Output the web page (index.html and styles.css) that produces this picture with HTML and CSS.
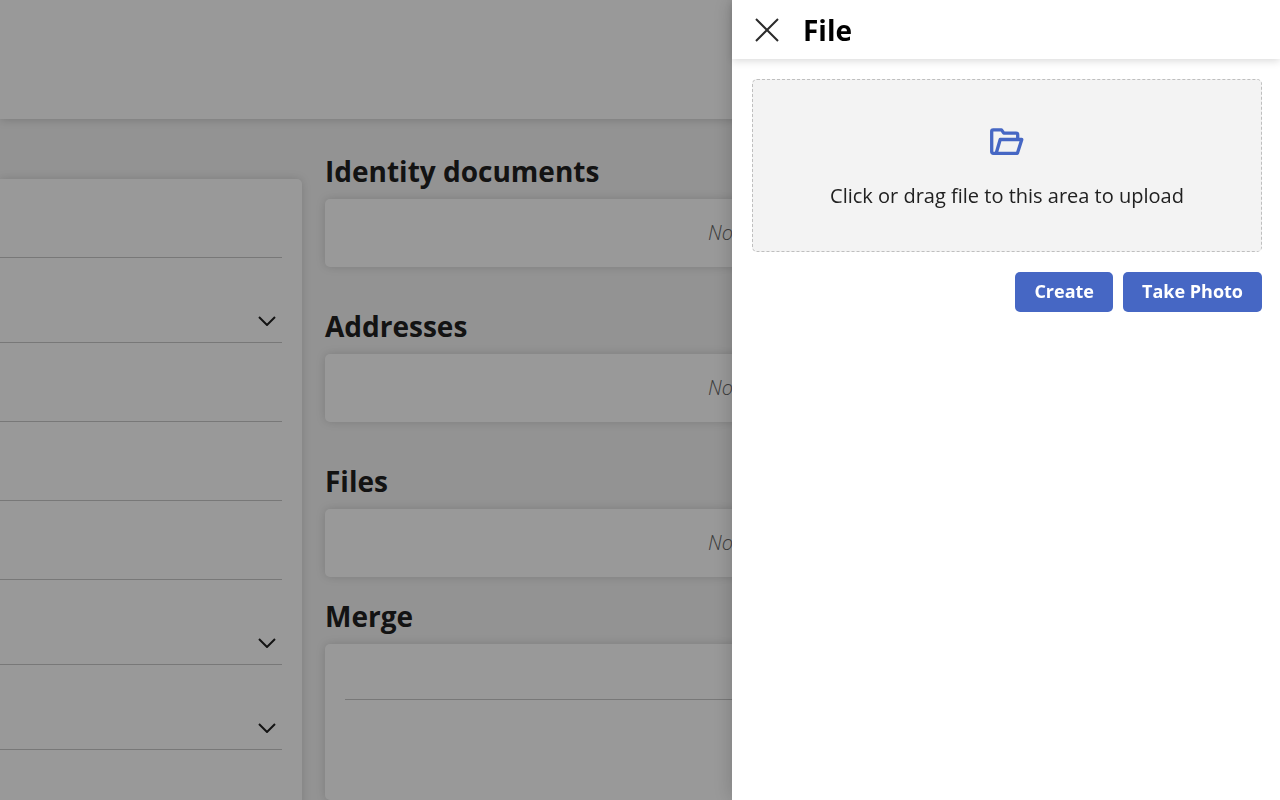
FILE: index.html
```html
<!DOCTYPE html>
<html lang="en">
<head>
    <meta charset="UTF-8">
    <title>File</title>
    <link rel="stylesheet" href="styles.css">
</head>
<body>

<div class="page">
    <header class="topbar"></header>

    <main class="content">
        <form class="card details">
            <div class="field"><input type="text" aria-label="First name"></div>
            <div class="field field-select">
                <select aria-label="Gender"></select>
                <svg class="chevron" viewBox="0 0 18 10"><path d="M1 1l8 8 8-8"/></svg>
            </div>
            <div class="field"><input type="text" aria-label="Last name"></div>
            <div class="field"><input type="text" aria-label="Phone"></div>
            <div class="field"><input type="text" aria-label="Email"></div>
            <div class="field field-select">
                <select aria-label="Language"></select>
                <svg class="chevron" viewBox="0 0 18 10"><path d="M1 1l8 8 8-8"/></svg>
            </div>
            <div class="field field-select">
                <select aria-label="Country"></select>
                <svg class="chevron" viewBox="0 0 18 10"><path d="M1 1l8 8 8-8"/></svg>
            </div>
        </form>

        <div class="related">
            <section class="group">
                <h2>Identity documents</h2>
                <div class="card empty">No data</div>
            </section>
            <section class="group">
                <h2>Addresses</h2>
                <div class="card empty">No data</div>
            </section>
            <section class="group group-last">
                <h2>Files</h2>
                <div class="card empty">No data</div>
            </section>
            <section class="group">
                <h2>Merge</h2>
                <div class="card merge"><input type="text" aria-label="Merge"></div>
            </section>
        </div>
    </main>
</div>

<div class="mask"></div>

<aside class="drawer">
    <header class="drawer-header">
        <button type="button" class="close" aria-label="Close">
            <svg viewBox="0 0 24 24"><path d="M1 1l22 22M23 1l-22 22"/></svg>
        </button>
        <h1>File</h1>
    </header>

    <div class="drawer-body">
        <label class="dropzone" for="upload">
            <input type="file" id="upload">
            <svg class="folder" viewBox="0 0 34 28">
                <path d="M6.500 25.300H3.200A1.500 1.500 0 0 1 1.700 23.800V3.300A1.500 1.500 0 0 1 3.200 1.800H11.500L13.800 5.200H26.200A1.500 1.500 0 0 1 27.700 6.700V11"/>
                <path d="M10.200 11.500H31.800L27.400 25.300H6.200Z"/>
            </svg>
            <span>Click or drag file to this area to upload</span>
        </label>

        <div class="actions">
            <button type="button" class="btn">Create</button>
            <button type="button" class="btn">Take Photo</button>
        </div>
    </div>
</aside>

</body>
</html>
```

FILE: styles.css
```css
* {
    box-sizing: border-box;
    margin: 0;
    padding: 0;
}

body {
    font-family: "Open Sans", "Noto Sans", sans-serif;
    font-size: 20px;
    color: #212121;
    background-color: #f5f5f5;
    overflow: hidden;
}

input,
select,
button {
    font: inherit;
}

/* page behind the drawer */
.page {
    height: 100vh;
    overflow: hidden;
}

.topbar {
    height: 119px;
    background-color: #fff;
    box-shadow: 0 0 10px rgba(0, 0, 0, 0.2);
}

.content {
    display: grid;
    grid-template-columns: 302px 1fr;
    gap: 23px;
    padding-right: 119px;
}

.card {
    background-color: #fff;
    border-radius: 5px;
    box-shadow: 0 0 10px rgba(0, 0, 0, 0.15);
}

.details {
    margin-top: 60px;
    padding: 0 20px 60px 0;
    border-top-left-radius: 0;
}

.field {
    display: flex;
    align-items: flex-end;
    height: 79px;
    border-bottom: 1px solid #c8c8c8;
}

.field input,
.field select,
.merge input {
    width: 100%;
    height: 40px;
    border: 0;
    outline: 0;
    background: transparent;
    appearance: none;
}

.field-select {
    height: 85px;
}

.chevron {
    flex: none;
    width: 18px;
    height: 10px;
    margin: 0 6px 16px 0;
    fill: none;
    stroke: #212121;
    stroke-width: 2;
}

.related {
    padding-top: 32px;
}

.group {
    margin-bottom: 39px;
}

.group-last {
    margin-bottom: 19px;
}

h2 {
    margin-bottom: 8px;
    font-size: 28px;
    font-weight: 700;
    line-height: 40px;
}

.empty {
    padding: 20px;
    line-height: 28px;
    color: #666;
    font-weight: 300;
    font-style: italic;
    text-align: center;
}

.merge {
    height: 156px;
    padding: 16px 20px;
}

.merge input {
    border-bottom: 1px solid #c8c8c8;
}

.mask {
    position: fixed;
    inset: 0;
    background-color: rgba(0, 0, 0, 0.4);
}

/* drawer */
.drawer {
    position: fixed;
    top: 0;
    right: 0;
    bottom: 0;
    width: 548px;
    background-color: #fff;
    color: #000;
    box-shadow: 0 0 20px rgba(0, 0, 0, 0.2);
}

.drawer-header {
    display: flex;
    align-items: center;
    gap: 24px;
    height: 59px;
    padding: 0 23px;
    box-shadow: 0 2px 8px rgba(0, 0, 0, 0.15);
}

.close {
    width: 24px;
    height: 24px;
    border: 0;
    background: none;
    cursor: pointer;
}

.close svg {
    display: block;
    fill: none;
    stroke: #2b2b2b;
    stroke-width: 2;
}

h1 {
    font-size: 28px;
    font-weight: 700;
    line-height: 40px;
}

.drawer-body {
    padding: 20px 18px 20px 20px;
}

.dropzone {
    display: flex;
    flex-direction: column;
    align-items: center;
    gap: 26px;
    padding: 48px 20px 41px;
    border: 1px dashed #bfbfbf;
    border-radius: 5px;
    background-color: #f3f3f3;
    color: #212121;
    line-height: 28px;
    cursor: pointer;
}

.dropzone input {
    display: none;
}

.folder {
    width: 34px;
    height: 28px;
    fill: none;
    stroke: #4667c4;
    stroke-width: 3.3;
    stroke-linejoin: round;
}

.actions {
    display: flex;
    justify-content: flex-end;
    gap: 10px;
    margin-top: 20px;
}

.btn {
    height: 40px;
    padding: 0 19px 2px;
    border: 0;
    border-radius: 5px;
    background-color: #4667c4;
    color: #fff;
    font-size: 18px;
    font-weight: 700;
    cursor: pointer;
}
```
